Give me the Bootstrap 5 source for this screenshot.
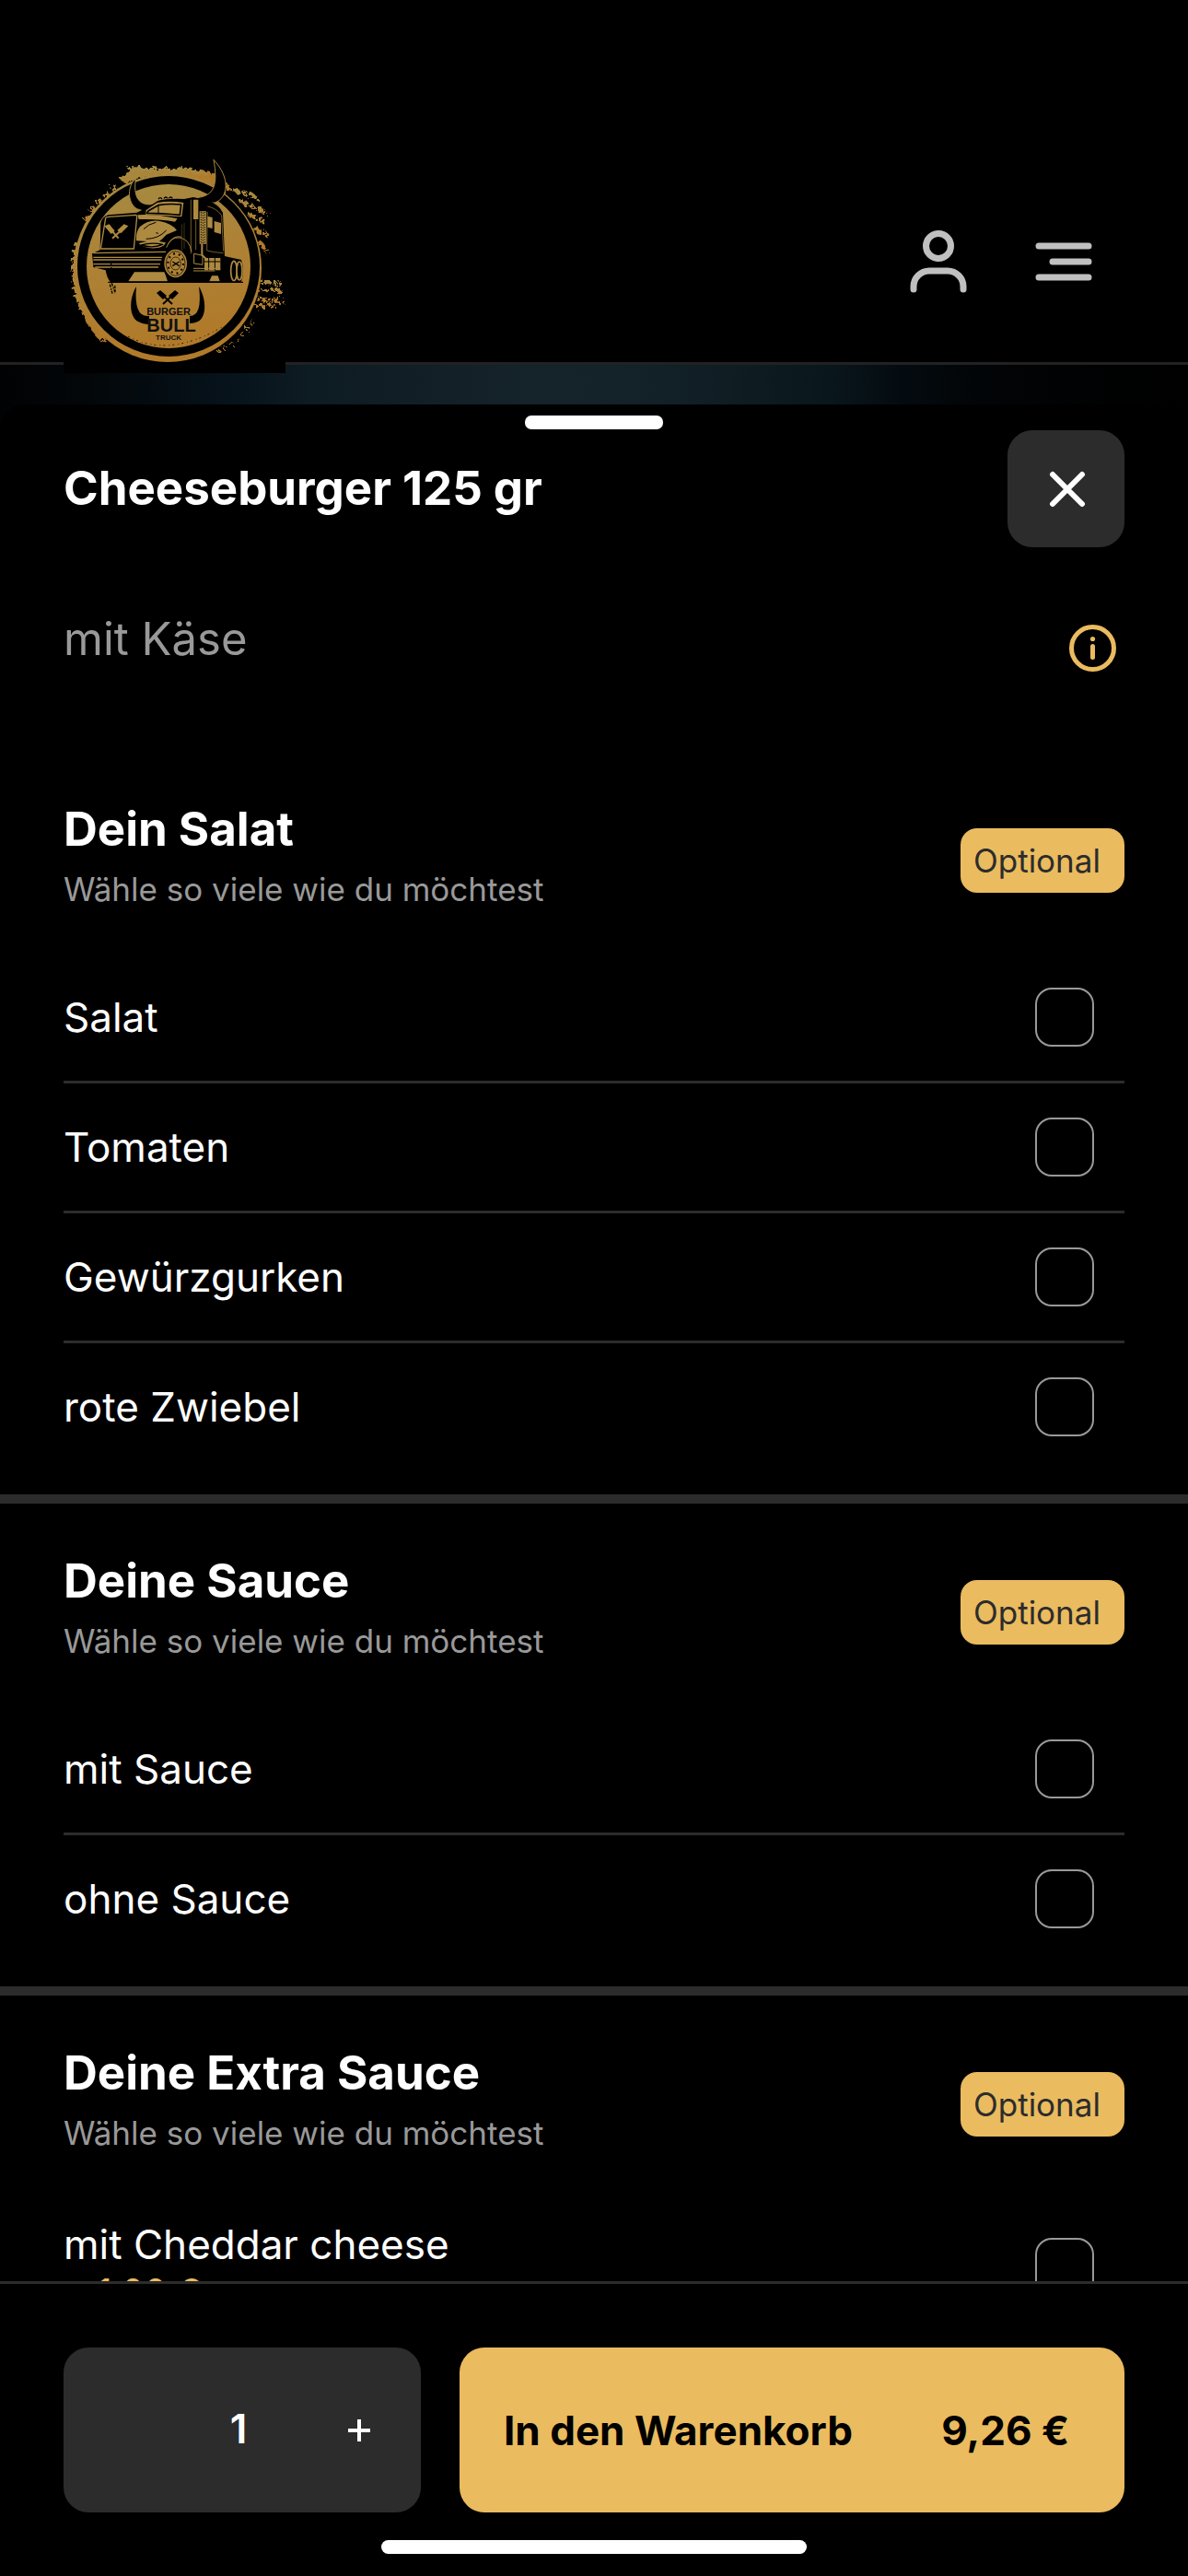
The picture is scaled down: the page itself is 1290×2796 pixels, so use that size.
<!DOCTYPE html>
<html lang="de" data-bs-theme="dark">
<head>
<meta charset="utf-8">
<meta name="viewport" content="width=device-width, initial-scale=1">
<title>Burger Bull Truck – Cheeseburger 125 gr</title>
<link href="https://cdn.jsdelivr.net/npm/bootstrap@5.3.0/dist/css/bootstrap.min.css" rel="stylesheet">
<style>
  :root { --gold: #eabb5f; --panel: #2c2c2c; --muted: #999; --gutter: 69px; }
  body { background: #000; color: #fff; font-family: Inter, "Liberation Sans", sans-serif; font-size: 44px; line-height: 54px; }
  .screen { height: 100vh; overflow: hidden; }
  .gutter { padding-left: var(--gutter); padding-right: var(--gutter); }
  .topbar { height: 396px; padding-top: 164px; border-bottom: 3px solid #222; }
  .brand-logo { width: 241px; height: 241px; flex: none; position: relative; z-index: 1; }
  .brand-logo svg { display: block; }
  .nav-icons { padding: 72px 16px 0 0; gap: 36px; }
  .icon-btn { width: 100px; height: 96px; padding: 0; border: 0; background: none; color: #c0c0c0; display: flex; align-items: center; justify-content: center; }
  .backdrop { height: 80px; margin-bottom: -37px; flex: none;
    background: linear-gradient(90deg, #010203 0%, #03080b 9%, #061119 18%, #0d1b22 26%, #121f27 36%, #15232b 45%, #14222a 52%, #0f1d23 62%, #09161c 70%, #040b10 76%, #020507 82%, #010203 90%, #000 100%); }
  .sheet { background: #000; border-radius: 27px 27px 0 0; min-height: 0; position: relative; }
  .handle { width: 150px; height: 15px; border-radius: 7px; background: #fff; margin: 12px auto 0; flex: none; }
  .title { font-size: 51px; line-height: 60px; font-weight: 700; margin: 0; }
  .sheet-head { height: 128px; flex: none; }
  .close-btn { width: 127px; height: 127px; border: 0; padding: 0 0 0 3px; border-radius: 27px; background: var(--panel); color: #fff; }
  .close-btn svg { display: block; margin: 0 auto; }
  .desc { font-size: 49px; line-height: 60px; color: var(--muted); }
  .desc-row { padding-top: 70px; padding-bottom: 87px; }
  .info-btn { border: 0; padding: 0; background: none; margin: 14px 9px 0 0; height: 51px; }
  .scroller { min-height: 0; overflow: hidden; }
  .group { border-bottom: 10px solid var(--panel); padding-top: 54px; padding-bottom: 23px; }
  .group-head { height: 165px; }
  .hint { font-size: 35px; line-height: 48px; color: var(--muted); margin-top: 11px; }
  .tag-optional { width: 178px; height: 70px; border-radius: 18px; background: var(--gold); color: #2c2c2c; font-size: 35px; line-height: 70px; padding-left: 14px; margin-top: 29px; }
  .option { min-height: 141px; border-bottom: 3px solid var(--panel); padding-right: 33px; }
  .option:last-child { border-color: transparent; }
  .option-tall { padding: 24px 33px 24px 0; }
  .extra-price { color: var(--gold); font-size: 39px; line-height: 50px; }
  .form-check-input.pick { width: 64px; height: 64px; margin: 0; border: 2px solid #999; border-radius: 18px; background-color: #000; flex: none; }
  .buybar { border-top: 3px solid var(--panel); height: 320px; padding-top: 69px; background: #000; flex: none; }
  .stepper { width: 388px; height: 179px; border-radius: 27px; background: var(--panel); flex: none; }
  .stepper button { width: 129px; height: 179px; border: 0; padding: 0 6px 0 0; background: none; color: #fff; }
  .stepper svg { display: block; margin: 0 auto; }
  .stepper input { width: 120px; border: 0; background: none; color: #fff; font-weight: 600; text-align: center; padding: 0; margin-right: 9px; height: 179px; padding-bottom: 4px; }
  .buy-btn { height: 179px; border: 0; border-radius: 27px; background: var(--gold); color: #000; font-size: 44px; font-weight: 700; padding: 0 60px 0 48px; }
  .buy-row { gap: 42px; }
  .home-bar { width: 462px; height: 15px; border-radius: 8px; background: #fff; margin: 30px auto 0; }
</style>
<script src="https://cdn.jsdelivr.net/npm/bootstrap@5.3.0/dist/js/bootstrap.bundle.min.js"></script>
</head>
<body>
<div class="screen d-flex flex-column">
  <header class="topbar gutter d-flex justify-content-between align-items-start flex-shrink-0">
    <a class="brand-logo" href="#" aria-label="Burger Bull Truck">
      <svg width="241" height="241" viewBox="0 0 241 241">
        <defs>
          <linearGradient id="gold" x1="0" y1="0" x2="0.2" y2="1">
            <stop offset="0" stop-color="#a58a42"/><stop offset=".5" stop-color="#ad8236"/><stop offset="1" stop-color="#b07a2a"/>
          </linearGradient>
          <filter id="rough" x="-10%" y="-10%" width="120%" height="120%">
            <feTurbulence type="fractalNoise" baseFrequency=".25" numOctaves="2" seed="4"/>
            <feDisplacementMap in="SourceGraphic" scale="12"/>
          </filter>
        </defs>
        <rect width="241" height="241" fill="#000"/>
        <!-- brushed outer edge -->
        <g filter="url(#rough)" fill="none" stroke="url(#gold)">
          <path d="M66 34C72 24 86 26 100 24M98 27c30-6 55-2 80 16" stroke-width="12"/>
          <path d="M70 21l46 2M124 21l42 8" stroke-width="8"/>
          <path d="M24 76C34 58 46 46 60 38" stroke-width="5" stroke-dasharray="7 4"/>
          <path d="M17 100C8 132 14 172 44 205" stroke-width="8"/>
          <path d="M184 42l26 8M192 54l30 14M202 69l18 8M207 84l16 8M212 98l10 12" stroke-width="5" stroke-dasharray="8 4 4 4"/>
          <path d="M214 142l22 2M211 150l26 2M210 160l30 3M208 168l20 -1" stroke-width="5" stroke-dasharray="3 2 6 3"/>
          <path d="M206 184l-14 16M191 204l-24 14" stroke-width="2" stroke-dasharray="5 3"/>
        </g>
        <ellipse cx="113" cy="127" rx="102" ry="102" fill="url(#gold)"/>
        <ellipse cx="114" cy="125" rx="99" ry="98" fill="#000"/>
        <ellipse cx="114" cy="125" rx="89" ry="89" fill="url(#gold)"/>

        <!-- truck, drawn at three times its size -->
        <g transform="translate(31 46) scale(.3333)" stroke-linejoin="round">
          <g fill="#000" stroke="#a98a3e" stroke-width="3">
            <path d="M142-47C116-30 112 30 146 50q20 10 44 8l12-24C150 44 134 8 142-47Z"/>
            <path d="M396-110C452-50 444 14 400 30L332 34 340 14C400 8 410-30 396-110Z"/>
          </g>
          <path d="M28 96Q32 78 52 70L146 62 180 46 214 24Q240 16 300 18L330 12 372 22Q412 34 426 62L432 204 448 208 486 216Q498 250 486 288H60Q48 276 44 250L4 240 0 196 26 184Z" fill="#000"/>
          <g fill="#ad8a40" stroke="none">
            <path d="M176 54l36-24q40-8 86 0l-6 46q-50-4-118-8Z"/>
            <path d="M148 70q58-4 130 12l-8 10q-50-10-118-8Z"/>
            <path d="M156 108q30-24 64-18 40 8 56 30l-34 14q-14 16-26 24l-72-4q-2-30 12-46Z"/>
            <path d="M152 162q40-14 88-2-6 16-34 18-38 2-54-16Z"/>
            <path d="M330 20h16v64h-16ZM350 58h22v106h-22Z"/>
            <path d="M376 74l16 4v36l-16-4ZM398 90l22 6v36l-22-6Z"/>
            <path d="M138 256h98l10 30H118ZM390 268h20l6 18h-34Z"/>
            <path d="M366 210h52v40h-52Z"/>
          </g>
          <path d="M184 56l32-18q36-6 74-2l-4 34q-60-6-108-6Z" fill="none" stroke="#000" stroke-width="5"/>
          <path d="M216 36v30M168 116q14-16 40-22M176 148q40 0 66-28M208 128l8 2" fill="none" stroke="#000" stroke-width="3"/>
          <path d="M44 80q2-4 10-4l88-6q4 0 4 6l-10 104H28Z" fill="none" stroke="#ad8a40" stroke-width="4"/>
          <path d="M52 84l80-4-8 92H36Z" fill="#000"/>
          <path d="M56 112l30 34M104 112l-38 34" stroke="#ad8a40" stroke-width="6"/>
          <path d="M40 106l16-6 18 22-12 10ZM118 106l-14-6-22 20 12 10Z" fill="#ad8a40"/>
          <path d="M160 168q34-10 70-2-34 14-70 2Z" fill="#ad8a40" stroke="#000" stroke-width="4"/>
          <path d="M4 194l236-4M4 208h224M4 216h222M4 230h218M10 240h206" fill="none" stroke="#ad8a40" stroke-width="4"/>
          <path d="M242 176q14-36 44-32 32 6 38 46M248 164q18-30 44-22" fill="none" stroke="#ad8a40" stroke-width="3"/>
          <ellipse cx="276" cy="230" rx="46" ry="56" fill="#000"/>
          <ellipse cx="272" cy="228" rx="37" ry="46" fill="#ad8236"/>
          <ellipse cx="272" cy="228" rx="31" ry="40" fill="none" stroke="#000" stroke-width="2"/>
          <ellipse cx="272" cy="228" rx="25" ry="32" fill="none" stroke="#000" stroke-width="6" stroke-dasharray="6 12"/>
          <ellipse cx="272" cy="228" rx="17" ry="21" fill="none" stroke="#000" stroke-width="2"/>
          <path d="M262 222l22 14M284 222l-22 14" stroke="#000" stroke-width="4"/>
          <path d="M355 60v102M361 62v102M367 60v102" stroke="#000" stroke-width="3" stroke-dasharray="4 4"/>
          <path d="M322 20v176M338 86v98M376 60l-2 126q20 6 54 8M376 42q30 6 46 30l6 116" fill="none" stroke="#ad8a40" stroke-width="2"/>
          <path d="M292 100v90M300 96v84" stroke="#5d4a22" stroke-width="2"/>
          <path d="M358 164v36l12 12" fill="none" stroke="#ad8a40" stroke-width="6"/>
          <path d="M366 222h52M380 210v40M400 210v40" stroke="#000" stroke-width="3"/>
          <path d="M332 196l28 6v30l-28-4ZM330 244h88M330 252h70" fill="none" stroke="#ad8a40" stroke-width="3"/>
          <g fill="#000" stroke="#ad8a40" stroke-width="5"><ellipse cx="462" cy="252" rx="10" ry="32"/><ellipse cx="480" cy="252" rx="9" ry="30"/></g>
          <path d="M216 18q6-8 12 0M234 16q6-8 12 0M250 16q6-8 12 0" fill="none" stroke="#000" stroke-width="4"/>
          <path d="M52 289H492" stroke="#000" stroke-width="4"/>
          <path d="M62 226l2 66 12 34M58 296l8 30M74 300l2 20" fill="none" stroke="#000" stroke-width="4" stroke-dasharray="10 4 5 3"/>
        </g>

        <!-- word mark between the horns -->
        <path d="M79 147C71 160 71 180 81 185q5 3 12 3v-9q-17 2-14-32ZM147 147c8 13 9 33-1 38q-4 2-9 2v-8q14 0 10-32Z" fill="#000"/>
        <path d="M104 153l14 13M122 153l-14 13" stroke="#000" stroke-width="2"/>
        <path d="M101 154l4-3 7 6-4 4ZM125 154l-4-3-7 6 4 4Z" fill="#000"/>
        <g fill="#111" text-anchor="middle" font-family="'Liberation Sans', sans-serif" font-weight="700">
          <text x="114" y="178" font-size="11">BURGER</text>
          <text x="117" y="196" font-size="20">BULL</text>
          <text x="114" y="205" font-size="8">TRUCK</text>
        </g>
        <path d="M70 201q44 24 102-10" fill="none" stroke="#2a1d08" stroke-width="1" stroke-dasharray="2 4 1 3"/>
      </svg>
    </a>
    <nav class="nav-icons d-flex">
      <button class="icon-btn" type="button" aria-label="Konto">
        <svg width="62" height="68" viewBox="0 0 62 68" fill="none" stroke="currentColor" stroke-width="7" stroke-linecap="round"><circle cx="31" cy="17" r="13.5"/><path d="M4 64V61A17 17 0 0 1 21 44H41A17 17 0 0 1 58 61V64"/></svg>
      </button>
      <button class="icon-btn" type="button" aria-label="Menü">
        <svg width="62" height="42" viewBox="0 0 62 42" fill="none" stroke="currentColor" stroke-width="7" stroke-linecap="round"><path d="M4 4H58M19 21H58M4 38H58"/></svg>
      </button>
    </nav>
  </header>

  <div class="backdrop"></div>

  <main class="sheet d-flex flex-column flex-fill">
    <div class="handle"></div>
    <div class="sheet-head gutter d-flex justify-content-between">
      <h1 class="title align-self-center">Cheeseburger 125 gr</h1>
      <button class="close-btn mt-auto" type="button" aria-label="Schließen">
        <svg width="40" height="40" viewBox="0 0 40 40" stroke="currentColor" stroke-width="6" stroke-linecap="round"><path d="M4 4L36 36M36 4L4 36"/></svg>
      </button>
    </div>

    <div class="scroller flex-fill">
      <div class="desc-row gutter d-flex justify-content-between align-items-start">
        <p class="desc mb-0">mit Käse</p>
        <button class="info-btn" type="button" aria-label="Information">
          <svg class="d-block" width="51" height="51" viewBox="0 0 51 51" fill="none" stroke="#eabb5f" stroke-width="5"><circle cx="25.5" cy="25.5" r="23"/><path d="M25.5 23.5V35.5" stroke-linecap="round"/><circle cx="25.5" cy="15.5" r="2.6" fill="#eabb5f" stroke="none"/></svg>
        </button>
      </div>

      <section class="group gutter">
        <div class="group-head d-flex justify-content-between align-items-start">
          <div><h2 class="title">Dein Salat</h2><p class="hint mb-0">Wähle so viele wie du möchtest</p></div>
          <span class="tag-optional">Optional</span>
        </div>
        <div class="option d-flex justify-content-between align-items-center"><label for="o1">Salat</label><input class="form-check-input pick" type="checkbox" id="o1"></div>
        <div class="option d-flex justify-content-between align-items-center"><label for="o2">Tomaten</label><input class="form-check-input pick" type="checkbox" id="o2"></div>
        <div class="option d-flex justify-content-between align-items-center"><label for="o3">Gewürzgurken</label><input class="form-check-input pick" type="checkbox" id="o3"></div>
        <div class="option d-flex justify-content-between align-items-center"><label for="o4">rote Zwiebel</label><input class="form-check-input pick" type="checkbox" id="o4"></div>
      </section>

      <section class="group gutter">
        <div class="group-head d-flex justify-content-between align-items-start">
          <div><h2 class="title">Deine Sauce</h2><p class="hint mb-0">Wähle so viele wie du möchtest</p></div>
          <span class="tag-optional">Optional</span>
        </div>
        <div class="option d-flex justify-content-between align-items-center"><label for="o5">mit Sauce</label><input class="form-check-input pick" type="checkbox" id="o5"></div>
        <div class="option d-flex justify-content-between align-items-center"><label for="o6">ohne Sauce</label><input class="form-check-input pick" type="checkbox" id="o6"></div>
      </section>

      <section class="group gutter">
        <div class="group-head d-flex justify-content-between align-items-start">
          <div><h2 class="title">Deine Extra Sauce</h2><p class="hint mb-0">Wähle so viele wie du möchtest</p></div>
          <span class="tag-optional">Optional</span>
        </div>
        <div class="option option-tall d-flex justify-content-between align-items-center"><label for="o7">mit Cheddar cheese<span class="extra-price d-block">+ 1,00 €</span></label><input class="form-check-input pick" type="checkbox" id="o7"></div>
      </section>
    </div>
  </main>

  <footer class="buybar gutter">
    <div class="buy-row d-flex">
      <div class="stepper d-flex align-items-center justify-content-end">
        <input type="text" inputmode="numeric" value="1" aria-label="Menge">
        <button type="button" aria-label="Mehr">
          <svg width="24" height="24" viewBox="0 0 24 24" stroke="currentColor" stroke-width="4"><path d="M12 0V24M0 12H24"/></svg>
        </button>
      </div>
      <button class="buy-btn d-flex flex-fill justify-content-between align-items-center" type="button"><span>In den Warenkorb</span><span>9,26 €</span></button>
    </div>
    <div class="home-bar"></div>
  </footer>
</div>
</body>
</html>
